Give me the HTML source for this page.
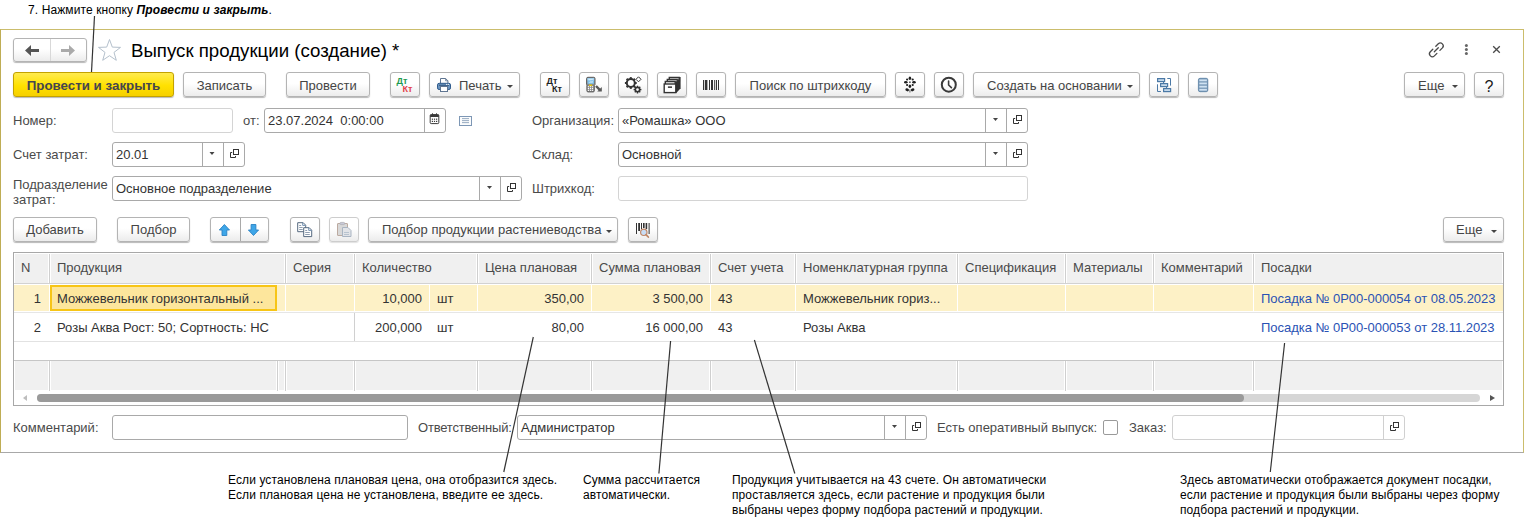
<!DOCTYPE html>
<html><head><meta charset="utf-8">
<style>
*{box-sizing:border-box}
html,body{margin:0;padding:0}
body{width:1524px;height:520px;overflow:hidden;background:#fff;position:relative;font-family:"Liberation Sans",sans-serif;font-size:13px;color:#333}
.a{position:absolute;white-space:nowrap}
.frame{position:absolute;left:0;top:29px;width:1524px;height:424px;border-top:1px solid #cbbd6c;border-left:1px solid #bfad55;border-right:1px solid #cbbd6c;border-bottom:1px solid #a8a8a8}
.btn{position:absolute;height:25px;top:72px;border:1px solid #b4b4b4;border-radius:3px;background:linear-gradient(#fff 0,#fff 45%,#ececec 100%);box-shadow:0 1px 1px rgba(0,0,0,.28);color:#454545;text-align:center;line-height:23px;padding-top:1px;white-space:nowrap}
.tb2{top:217px;height:25px;line-height:22px}
.lbl{position:absolute;color:#4a4a4a;white-space:nowrap;line-height:15px}
.inp{position:absolute;height:25px;border:1px solid #a9a9a9;border-radius:3px;background:#fff;color:#333;line-height:23px;padding-left:3px;white-space:nowrap}
.inp.dis{border-color:#d4d4d4}
.dd{position:absolute;top:0;bottom:0;border-left:1px solid #a9a9a9}
.caret{position:absolute;width:0;height:0;border-left:3.5px solid transparent;border-right:3.5px solid transparent;border-top:4px solid #444}
.ann{position:absolute;font-size:12px;line-height:15px;color:#000;white-space:nowrap;letter-spacing:0.1px}
.th{color:#4a4a4a;line-height:15px;margin-top:-1px}
.td{color:#333;line-height:15px}
svg.ln{position:absolute;left:0;top:0;pointer-events:none}
</style></head><body>
<!-- top annotation -->
<div class="ann" style="left:28px;top:3px">7. Нажмите кнопку <b><i>Провести и закрыть</i></b>.</div>

<div class="frame"></div>

<!-- nav -->
<div class="btn" style="left:13px;top:38px;width:74px;height:24px"></div>
<div class="a" style="left:50px;top:39px;width:1px;height:22px;background:#d8d8d8"></div>

<!-- title -->
<div class="a" style="left:131px;top:39px;font-size:18.67px;line-height:24px;color:#000">Выпуск продукции (создание) *</div>

<!-- toolbar -->
<div class="btn" style="left:13px;width:161px;background:linear-gradient(#ffeb4e 0%,#ffe100 55%,#f6d000 100%);border-color:#c3a200;color:#45454f;font-weight:bold;font-size:13.33px">Провести и закрыть</div>
<div class="btn" style="left:183px;width:83px">Записать</div>
<div class="btn" style="left:286px;width:84px">Провести</div>
<div class="btn" style="left:390px;width:30px"></div>
<div class="btn" style="left:429px;width:91px;text-align:left;padding-left:29px">Печать</div>
<div class="btn" style="left:540px;width:30px"></div>
<div class="btn" style="left:579px;width:30px"></div>
<div class="btn" style="left:618px;width:30px"></div>
<div class="btn" style="left:657px;width:30px"></div>
<div class="btn" style="left:696px;width:30px"></div>
<div class="btn" style="left:735px;width:151px">Поиск по штрихкоду</div>
<div class="btn" style="left:895px;width:30px"></div>
<div class="btn" style="left:934px;width:30px"></div>
<div class="btn" style="left:973px;width:167px;text-align:left;padding-left:13px">Создать на основании</div>
<div class="btn" style="left:1149px;width:30px"></div>
<div class="btn" style="left:1188px;width:30px"></div>
<div class="btn" style="left:1404px;width:61px;text-align:left;padding-left:13px">Еще</div>
<div class="btn" style="left:1474px;width:30px;font-size:16px;color:#1a1a1a;padding-top:2px">?</div>

<!-- fields -->
<div class="lbl" style="left:13px;top:113px">Номер:</div>
<div class="inp dis" style="left:112px;top:108px;width:121px"></div>
<div class="lbl" style="left:243px;top:113px">от:</div>
<div class="inp" style="left:264px;top:108px;width:182px">23.07.2024&nbsp; 0:00:00<div class="dd" style="left:159px"></div></div>

<div class="lbl" style="left:532px;top:113px">Организация:</div>
<div class="inp" style="left:618px;top:108px;width:410px">«Ромашка» ООО<div class="dd" style="left:366px"></div><div class="dd" style="left:387px"></div></div>

<div class="lbl" style="left:13px;top:147px">Счет затрат:</div>
<div class="inp" style="left:112px;top:142px;width:133px">20.01<div class="dd" style="left:89px"></div><div class="dd" style="left:110px"></div></div>
<div class="lbl" style="left:532px;top:147px">Склад:</div>
<div class="inp" style="left:618px;top:142px;width:410px">Основной<div class="dd" style="left:366px"></div><div class="dd" style="left:387px"></div></div>

<div class="lbl" style="left:13px;top:177px">Подразделение<br>затрат:</div>
<div class="inp" style="left:112px;top:176px;width:410px">Основное подразделение<div class="dd" style="left:366px"></div><div class="dd" style="left:387px"></div></div>
<div class="lbl" style="left:532px;top:181px">Штрихкод:</div>
<div class="inp dis" style="left:618px;top:176px;width:410px"></div>

<!-- table toolbar -->
<div class="btn tb2" style="left:13px;width:84px">Добавить</div>
<div class="btn tb2" style="left:117px;width:73px">Подбор</div>
<div class="btn tb2" style="left:210px;width:59px"></div>
<div class="a" style="left:240px;top:218px;width:1px;height:23px;background:#a9a9a9"></div>
<div class="btn tb2" style="left:290px;width:30px"></div>
<div class="btn tb2" style="left:329px;width:30px;border-color:#cdcdcd;box-shadow:0 1px 1px rgba(0,0,0,.12)"></div>
<div class="btn tb2" style="left:368px;width:250px;text-align:left;padding-left:13px">Подбор продукции растениеводства</div>
<div class="btn tb2" style="left:628px;width:30px"></div>
<div class="btn tb2" style="left:1443px;width:61px;text-align:left;padding-left:12px">Еще</div>

<!-- table -->
<div class="a" style="left:13px;top:252px;width:1491px;height:154px;border:1px solid #a8a8a8;background:#fff"></div>
<div class="a" style="left:15px;top:254px;width:1487px;height:29px;background:#f0f0f0"></div>
<div class="a" style="left:14px;top:283px;width:1489px;height:1px;background:#d2d2d2"></div>
<div class="a" style="left:48px;top:254px;width:3px;height:29px;background:#fff"></div><div class="a" style="left:49px;top:254px;width:1px;height:29px;background:#cfcfcf"></div>
<div class="a" style="left:284px;top:254px;width:3px;height:29px;background:#fff"></div><div class="a" style="left:285px;top:254px;width:1px;height:29px;background:#cfcfcf"></div>
<div class="a" style="left:353px;top:254px;width:3px;height:29px;background:#fff"></div><div class="a" style="left:354px;top:254px;width:1px;height:29px;background:#cfcfcf"></div>
<div class="a" style="left:476px;top:254px;width:3px;height:29px;background:#fff"></div><div class="a" style="left:477px;top:254px;width:1px;height:29px;background:#cfcfcf"></div>
<div class="a" style="left:590px;top:254px;width:3px;height:29px;background:#fff"></div><div class="a" style="left:591px;top:254px;width:1px;height:29px;background:#cfcfcf"></div>
<div class="a" style="left:709px;top:254px;width:3px;height:29px;background:#fff"></div><div class="a" style="left:710px;top:254px;width:1px;height:29px;background:#cfcfcf"></div>
<div class="a" style="left:794px;top:254px;width:3px;height:29px;background:#fff"></div><div class="a" style="left:795px;top:254px;width:1px;height:29px;background:#cfcfcf"></div>
<div class="a" style="left:956px;top:254px;width:3px;height:29px;background:#fff"></div><div class="a" style="left:957px;top:254px;width:1px;height:29px;background:#cfcfcf"></div>
<div class="a" style="left:1064px;top:254px;width:3px;height:29px;background:#fff"></div><div class="a" style="left:1065px;top:254px;width:1px;height:29px;background:#cfcfcf"></div>
<div class="a" style="left:1152px;top:254px;width:3px;height:29px;background:#fff"></div><div class="a" style="left:1153px;top:254px;width:1px;height:29px;background:#cfcfcf"></div>
<div class="a" style="left:1252px;top:254px;width:3px;height:29px;background:#fff"></div><div class="a" style="left:1253px;top:254px;width:1px;height:29px;background:#cfcfcf"></div>
<div class="a th" style="left:21px;top:261px">N</div>
<div class="a th" style="left:57px;top:261px">Продукция</div>
<div class="a th" style="left:293px;top:261px">Серия</div>
<div class="a th" style="left:362px;top:261px">Количество</div>
<div class="a th" style="left:485px;top:261px">Цена плановая</div>
<div class="a th" style="left:599px;top:261px">Сумма плановая</div>
<div class="a th" style="left:718px;top:261px">Счет учета</div>
<div class="a th" style="left:803px;top:261px">Номенклатурная группа</div>
<div class="a th" style="left:965px;top:261px">Спецификация</div>
<div class="a th" style="left:1073px;top:261px">Материалы</div>
<div class="a th" style="left:1161px;top:261px">Комментарий</div>
<div class="a th" style="left:1261px;top:261px">Посадки</div>
<div class="a" style="left:14px;top:285px;width:1489px;height:26px;background:#fdf1c6"></div>
<div class="a" style="left:49px;top:285px;width:1px;height:26px;background:#fff"></div>
<div class="a" style="left:285px;top:285px;width:1px;height:26px;background:#fff"></div>
<div class="a" style="left:354px;top:285px;width:1px;height:26px;background:#fff"></div>
<div class="a" style="left:477px;top:285px;width:1px;height:26px;background:#fff"></div>
<div class="a" style="left:591px;top:285px;width:1px;height:26px;background:#fff"></div>
<div class="a" style="left:710px;top:285px;width:1px;height:26px;background:#fff"></div>
<div class="a" style="left:795px;top:285px;width:1px;height:26px;background:#fff"></div>
<div class="a" style="left:957px;top:285px;width:1px;height:26px;background:#fff"></div>
<div class="a" style="left:1065px;top:285px;width:1px;height:26px;background:#fff"></div>
<div class="a" style="left:1153px;top:285px;width:1px;height:26px;background:#fff"></div>
<div class="a" style="left:1253px;top:285px;width:1px;height:26px;background:#fff"></div>
<div class="a" style="left:429px;top:285px;width:1px;height:26px;background:#fff"></div>
<div class="a" style="left:14px;top:312px;width:1489px;height:1px;background:#e6e6e6"></div>
<div class="a" style="left:14px;top:341px;width:1489px;height:1px;background:#e2e2e2"></div>
<div class="a" style="left:354px;top:313px;width:1px;height:28px;background:#d0d0d0"></div>
<div class="a" style="left:50px;top:285px;width:227px;height:26px;border:2px solid #f7c516;background:#fde69c"></div>
<div class="a td" style="right:1483px;top:291px">1</div>
<div class="a td" style="left:57px;top:291px">Можжевельник горизонтальный ...</div>
<div class="a td" style="right:1102px;top:291px">10,000</div>
<div class="a td" style="left:437px;top:291px">шт</div>
<div class="a td" style="right:940px;top:291px">350,00</div>
<div class="a td" style="right:821px;top:291px">3 500,00</div>
<div class="a td" style="left:718px;top:291px">43</div>
<div class="a td" style="left:803px;top:291px">Можжевельник гориз...</div>
<div class="a td" style="left:1261px;top:291px;color:#2a52b4;letter-spacing:-0.03px">Посадка № 0P00-000054 от 08.05.2023</div>
<div class="a td" style="right:1483px;top:320px">2</div>
<div class="a td" style="left:57px;top:320px">Розы Аква Рост: 50; Сортность: НС</div>
<div class="a td" style="right:1102px;top:320px">200,000</div>
<div class="a td" style="left:437px;top:320px">шт</div>
<div class="a td" style="right:940px;top:320px">80,00</div>
<div class="a td" style="right:821px;top:320px">16 000,00</div>
<div class="a td" style="left:718px;top:320px">43</div>
<div class="a td" style="left:803px;top:320px">Розы Аква</div>
<div class="a td" style="left:1261px;top:320px;color:#2a52b4;letter-spacing:-0.03px">Посадка № 0P00-000053 от 28.11.2023</div>
<div class="a" style="left:14px;top:360px;width:1489px;height:1px;background:#c6c6c6"></div>
<div class="a" style="left:15px;top:361px;width:1487px;height:29px;background:#f0f0f0"></div>
<div class="a" style="left:48px;top:361px;width:3px;height:29px;background:#fff"></div><div class="a" style="left:49px;top:361px;width:1px;height:30px;background:#cfcfcf"></div>
<div class="a" style="left:276px;top:361px;width:3px;height:29px;background:#fff"></div><div class="a" style="left:277px;top:361px;width:1px;height:30px;background:#cfcfcf"></div>
<div class="a" style="left:284px;top:361px;width:3px;height:29px;background:#fff"></div><div class="a" style="left:285px;top:361px;width:1px;height:30px;background:#cfcfcf"></div>
<div class="a" style="left:353px;top:361px;width:3px;height:29px;background:#fff"></div><div class="a" style="left:354px;top:361px;width:1px;height:30px;background:#cfcfcf"></div>
<div class="a" style="left:476px;top:361px;width:3px;height:29px;background:#fff"></div><div class="a" style="left:477px;top:361px;width:1px;height:30px;background:#cfcfcf"></div>
<div class="a" style="left:590px;top:361px;width:3px;height:29px;background:#fff"></div><div class="a" style="left:591px;top:361px;width:1px;height:30px;background:#cfcfcf"></div>
<div class="a" style="left:709px;top:361px;width:3px;height:29px;background:#fff"></div><div class="a" style="left:710px;top:361px;width:1px;height:30px;background:#cfcfcf"></div>
<div class="a" style="left:794px;top:361px;width:3px;height:29px;background:#fff"></div><div class="a" style="left:795px;top:361px;width:1px;height:30px;background:#cfcfcf"></div>
<div class="a" style="left:956px;top:361px;width:3px;height:29px;background:#fff"></div><div class="a" style="left:957px;top:361px;width:1px;height:30px;background:#cfcfcf"></div>
<div class="a" style="left:1064px;top:361px;width:3px;height:29px;background:#fff"></div><div class="a" style="left:1065px;top:361px;width:1px;height:30px;background:#cfcfcf"></div>
<div class="a" style="left:1152px;top:361px;width:3px;height:29px;background:#fff"></div><div class="a" style="left:1153px;top:361px;width:1px;height:30px;background:#cfcfcf"></div>
<div class="a" style="left:1252px;top:361px;width:3px;height:29px;background:#fff"></div><div class="a" style="left:1253px;top:361px;width:1px;height:30px;background:#cfcfcf"></div>
<div class="a" style="left:37px;top:394px;width:1443px;height:8px;border-radius:4px;background:#d6d6d6"></div>
<div class="a" style="left:37px;top:394px;width:1207px;height:8px;border-radius:4px;background:#9a9a9a"></div>
<div class="a" style="left:23px;top:395px;width:0;height:0;border-top:3px solid transparent;border-bottom:3px solid transparent;border-right:4px solid #bdbdbd"></div>
<div class="a" style="left:1490px;top:395px;width:0;height:0;border-top:3.5px solid transparent;border-bottom:3.5px solid transparent;border-left:5px solid #555"></div>

<!-- bottom fields -->
<div class="lbl" style="left:13px;top:420px">Комментарий:</div>
<div class="inp" style="left:112px;top:415px;width:296px"></div>
<div class="lbl" style="left:418px;top:420px;letter-spacing:-0.2px">Ответственный:</div>
<div class="inp" style="left:517px;top:415px;width:410px">Администратор<div class="dd" style="left:366px"></div><div class="dd" style="left:387px"></div></div>
<div class="lbl" style="left:937px;top:420px">Есть оперативный выпуск:</div>
<div class="a" style="left:1103px;top:420px;width:15px;height:15px;border:1px solid #9a9a9a;border-radius:2px;background:#fff"></div>
<div class="lbl" style="left:1129px;top:420px">Заказ:</div>
<div class="inp" style="left:1172px;top:415px;width:233px;border-color:#d0d0d0"><div class="dd" style="left:210px;border-color:#d0d0d0"></div></div>

<!-- icons overlay -->
<svg class="ln" width="1524" height="520" style="overflow:visible">
<!-- nav arrows -->
<path d="M25 50.5 L31 45 L31 56 Z M30.5 49 H39 V52 H30.5 Z" fill="#555"/>
<path d="M75 50.5 L69 45 L69 56 Z M69.5 49 H61 V52 H69.5 Z" fill="#aaa"/>
<!-- star -->
<path d="M109.5 39.5 L112.3 47.1 L120.5 47.4 L114 52.4 L116.3 60.3 L109.5 55.7 L102.7 60.3 L105 52.4 L98.5 47.4 L106.7 47.1 Z" fill="none" stroke="#b4c0cc" stroke-width="1"/>
<!-- link icon -->
<g fill="none" stroke="#4a4a4a" stroke-width="1.3" stroke-linecap="round">
<path d="M1435.8 46.3 L1438.3 43.8 A2.9 2.9 0 0 1 1442.4 47.9 L1439.9 50.4"/>
<path d="M1432.8 49.3 L1430.3 51.8 A2.9 2.9 0 0 0 1434.4 55.9 L1436.9 53.4"/>
<path d="M1434.3 51.8 L1438.3 47.8"/>
</g>
<!-- dots -->
<g fill="#666"><circle cx="1466.4" cy="45.6" r="1.5"/><circle cx="1466.4" cy="49.5" r="1.5"/><circle cx="1466.4" cy="53.4" r="1.5"/></g>
<!-- close -->
<path d="M1493.2 46.2 L1499.8 52.8 M1499.8 46.2 L1493.2 52.8" stroke="#4a4a4a" stroke-width="1.3"/>

<!-- printer -->
<g>
<path d="M440.5 83.5 V78.5 H445.6 L447.9 80.8 V83.5" fill="#fff" stroke="#5f7591" stroke-width="1"/>
<path d="M445.6 78.5 V80.8 H447.9" fill="none" stroke="#5f7591" stroke-width="0.8"/>
<rect x="437.5" y="83.3" width="13" height="6.2" rx="1.6" fill="#6b94bf" stroke="#2f5b8c" stroke-width="1"/>
<rect x="439" y="84.8" width="10" height="0.9" fill="#2c4f78"/>
<rect x="446.1" y="83.9" width="1.1" height="1" fill="#fff"/><rect x="447.8" y="83.9" width="1.1" height="1" fill="#fff"/>
<rect x="440.5" y="86.5" width="7" height="5" fill="#fff" stroke="#5f7591" stroke-width="1"/>
</g>
<!-- terminal -->
<g>
<path d="M586.6 78.6 Q586.6 77.3 587.9 77.3 H593.7 Q595 77.3 595 78.6 V84.5 L594.3 85.3 V90.8 Q594.3 91.9 593.2 91.9 H588 Q586.9 91.9 586.9 90.8 V85.3 L586.6 84.5 Z" fill="#8c8c8c" stroke="#5a5a5a" stroke-width="1"/>
<rect x="587.5" y="78.2" width="6.6" height="5.6" fill="#7cc0ea"/>
<rect x="587.5" y="78.2" width="6.6" height="2.2" fill="#a8d8f4"/>
<path d="M588.6 79.5 H592.8 M589.6 80.9 L591.2 81.6 H593 M588.8 82.7 H592.8" stroke="#e8f6ff" stroke-width="0.6" fill="none"/>
<rect x="589" y="84.6" width="3.2" height="1.3" fill="#f2cf00"/>
<g fill="#fff"><rect x="587.8" y="86.2" width="1.2" height="1.1"/><rect x="589.9" y="86.2" width="1.2" height="1.1"/><rect x="591.9" y="86.2" width="1.2" height="1.1"/>
<rect x="587.8" y="88" width="1.2" height="1.1"/><rect x="589.9" y="88" width="1.2" height="1.1"/><rect x="591.9" y="88" width="1.2" height="1.1"/>
<rect x="587.8" y="89.8" width="1.2" height="1.1"/><rect x="589.9" y="89.8" width="1.2" height="1.1"/><rect x="591.9" y="89.8" width="1.2" height="1.1"/></g>
<path d="M596 86 L600.3 90.3" stroke="#585858" stroke-width="2.4"/>
<path d="M597.2 91.6 H601.8 V87 Z" fill="#585858"/>
</g>
<!-- gears -->
<g fill="none" stroke="#333">
<circle cx="630.8" cy="83" r="4" stroke-width="2"/>
<circle cx="637.5" cy="89.6" r="2.2" stroke-width="1.6"/>
<path d="M638.5 76.8 L641 79.3 L638.5 81.8 L636 79.3 Z" stroke-width="1"/>
</g>
<g fill="#333">
<g transform="translate(630.8 83)">
<rect x="-1" y="-5.9" width="2" height="2"/><rect x="-1" y="3.9" width="2" height="2"/><rect x="-5.9" y="-1" width="2" height="2"/><rect x="3.9" y="-1" width="2" height="2"/>
<g transform="rotate(45)"><rect x="-1" y="-5.9" width="2" height="2"/><rect x="-1" y="3.9" width="2" height="2"/><rect x="-5.9" y="-1" width="2" height="2"/><rect x="3.9" y="-1" width="2" height="2"/></g>
</g>
<g transform="translate(637.5 89.6)">
<rect x="-0.7" y="-3.9" width="1.4" height="1.6"/><rect x="-0.7" y="2.3" width="1.4" height="1.6"/><rect x="-3.9" y="-0.7" width="1.6" height="1.4"/><rect x="2.3" y="-0.7" width="1.6" height="1.4"/>
<g transform="rotate(45)"><rect x="-0.7" y="-3.9" width="1.4" height="1.6"/><rect x="-0.7" y="2.3" width="1.4" height="1.6"/><rect x="-3.9" y="-0.7" width="1.6" height="1.4"/><rect x="2.3" y="-0.7" width="1.6" height="1.4"/></g>
</g>
</g>
<!-- archive -->
<path d="M674 81.5 L679 77 H680.6 V88.3 L676.3 93 H674 Z" fill="#333"/>
<g stroke="#333" stroke-width="1.4" fill="#fff" stroke-linejoin="miter">
<path d="M669.3 80 V77.5 H679.2 V79.5 L677.5 80.5"/>
<path d="M667.3 82 V79.5 H677.2 V81.5 L675.5 82.5"/>
<path d="M665.3 84 V81.5 H675.2 V84"/>
<rect x="664.2" y="84" width="11.6" height="8.6"/>
</g>
<rect x="667.9" y="86.4" width="4.1" height="1.5" fill="#333"/>
<!-- barcode -->
<g fill="#333">
<rect x="703" y="80" width="1" height="10"/><rect x="704.8" y="80" width="2.6" height="10"/><rect x="709" y="80" width="1" height="10"/><rect x="711" y="80" width="2" height="10"/><rect x="714.2" y="80" width="1" height="10"/><rect x="716" y="80" width="1" height="10"/><rect x="718" y="80" width="1" height="10"/>
</g>
<!-- flower -->
<g fill="#1e1e1e">
<ellipse cx="909.9" cy="78.2" rx="1.3" ry="1.8"/>
<ellipse cx="909.9" cy="86.2" rx="1.3" ry="1.8"/>
<ellipse cx="905.8" cy="82.2" rx="1.8" ry="1.3"/>
<ellipse cx="914" cy="82.2" rx="1.8" ry="1.3"/>
<circle cx="907.1" cy="79.5" r="1.1"/><circle cx="912.7" cy="79.5" r="1.1"/><circle cx="907.1" cy="85" r="1.1"/><circle cx="912.7" cy="85" r="1.1"/>
<rect x="909.2" y="81.5" width="1.4" height="1.4"/>
<ellipse cx="907.2" cy="89.8" rx="1.9" ry="1.4" transform="rotate(25 907.2 89.8)"/>
<ellipse cx="912.6" cy="89.8" rx="1.9" ry="1.4" transform="rotate(-25 912.6 89.8)"/>
</g>
<rect x="909.2" y="89.5" width="1.4" height="3" fill="#8a8a8a"/>
<!-- clock -->
<g fill="none" stroke="#3a3a3a">
<circle cx="948.8" cy="84.7" r="7" stroke-width="2"/>
<path d="M948.6 81 V85 L951.4 87.6" stroke-width="1.6" stroke-linecap="round"/>
</g>
<!-- structure -->
<g stroke="#4b79a6" stroke-width="1.2" fill="#c4d8ea">
<rect x="1157.6" y="78.6" width="7" height="3"/>
<rect x="1160.6" y="83.6" width="7" height="3"/>
<rect x="1163.6" y="88.6" width="7" height="3"/>
<path d="M1163.5 81.6 V83.6 M1166.5 86.6 V88.6" fill="none" stroke-width="1"/>
<path d="M1167.3 78.5 H1170.5 V85.6" fill="none" stroke-width="1"/>
<path d="M1157.5 84.3 V91.5 H1160.9" fill="none" stroke-width="1"/>
</g>
<!-- list -->
<g>
<rect x="1198.4" y="78.3" width="9.4" height="13.4" rx="1.6" fill="#6f92b2" stroke="#5b80a3" stroke-width="0.8"/>
<g fill="#cfe2f2"><rect x="1199.3" y="79.4" width="7.6" height="1.9"/><rect x="1199.3" y="82.5" width="7.6" height="1.9"/><rect x="1199.3" y="85.7" width="7.6" height="1.9"/><rect x="1199.3" y="88.8" width="7.6" height="1.9"/></g>
</g>
<!-- carets toolbar -->
<g fill="#444">
<path d="M507 85 H513 L510 88 Z"/>
<path d="M1127 85 H1133 L1130 88 Z"/>
<path d="M1452 85 H1458 L1455 88 Z"/>
<path d="M606 230 H612 L609 233 Z"/>
<path d="M1491 230 H1497 L1494 233 Z"/>
</g>
<!-- field carets -->
<g fill="#444">
<path d="M993 118 H998 L995.5 121 Z"/>
<path d="M993 152 H998 L995.5 155 Z"/>
<path d="M487 186 H492 L489.5 189 Z"/>
<path d="M209.5 152 H214.5 L212 155 Z"/>
<path d="M892 425 H897 L894.5 428 Z"/>
</g>
<!-- open icons -->
<g fill="none" stroke="#333" stroke-width="1">
<g id="opn"><rect x="1016.5" y="115.5" width="5" height="5"/><path d="M1015.2 118.5 H1013.5 V123.5 H1018.5 V122"/></g>
<use href="#opn" transform="translate(0 34)"/>
<use href="#opn" transform="translate(-506 68)"/>
<use href="#opn" transform="translate(-783 34)"/>
<use href="#opn" transform="translate(-101 307)"/>
<use href="#opn" transform="translate(377 307)"/>
</g>
<!-- calendar -->
<g>
<rect x="430.2" y="114.6" width="8.6" height="9" rx="1" fill="#fff" stroke="#3a3a3a" stroke-width="1"/>
<rect x="430.2" y="114.6" width="8.6" height="2.4" fill="#3a3a3a"/>
<rect x="432" y="113.3" width="1" height="2" fill="#3a3a3a"/><rect x="436" y="113.3" width="1" height="2" fill="#3a3a3a"/>
<g fill="#3a3a3a"><rect x="431.8" y="118.6" width="1.2" height="1.2"/><rect x="433.9" y="118.6" width="1.2" height="1.2"/><rect x="436" y="118.6" width="1.2" height="1.2"/><rect x="431.8" y="120.8" width="1.2" height="1.2"/><rect x="433.9" y="120.8" width="1.2" height="1.2"/><rect x="436" y="120.8" width="1.2" height="1.2"/></g>
</g>
<!-- text icon -->
<g>
<rect x="459.5" y="116.5" width="12" height="9" fill="#fbfcfd" stroke="#7d97b5" stroke-width="1"/>
<g fill="#8da2bb"><rect x="462" y="118.2" width="7" height="0.9"/><rect x="462" y="120.2" width="7" height="0.9"/><rect x="462" y="122.2" width="7" height="0.9"/></g>
</g>
<!-- arrows up/down -->
<path d="M224.4 224.5 L229.5 230 H226.8 V235.5 H222 V230 H219.3 Z" fill="#3ea6e8" stroke="#2a82c4" stroke-width="0.9" stroke-linejoin="round"/>
<path d="M253.5 235.5 L258.6 230 H255.9 V224.5 H251.1 V230 H248.4 Z" fill="#3ea6e8" stroke="#2a82c4" stroke-width="0.9" stroke-linejoin="round"/>
<!-- copy -->
<g stroke="#56697f" stroke-width="1" fill="#fff">
<path d="M297.7 222.7 H303.2 L305.7 225.2 V231.7 H297.7 Z"/>
<path d="M302.7 222.7 V225.4 H305.6" fill="none" stroke="#6f8fb0"/>
<path d="M303.7 227.7 H309.2 L311.7 230.2 V236.6 H303.7 Z"/>
<path d="M308.7 227.7 V230.4 H311.6" fill="none" stroke="#6f8fb0"/>
</g>
<g fill="#8394a8"><rect x="299.2" y="225" width="2" height="0.9"/><rect x="299.2" y="227.1" width="3.5" height="0.9"/><rect x="299.2" y="229" width="3.5" height="0.9"/><rect x="305.2" y="230" width="2" height="0.9"/><rect x="305.2" y="232" width="4.6" height="0.9"/><rect x="305.2" y="234" width="4.6" height="0.9"/></g>
<!-- paste disabled -->
<g>
<rect x="337.5" y="223.5" width="10" height="12" rx="0.4" fill="#d8d8d8" stroke="#bcaaa0" stroke-width="1"/>
<rect x="340" y="222.4" width="4.6" height="2.2" rx="0.8" fill="#c8cad8" stroke="#b0b0b8" stroke-width="0.8"/>
<path d="M342.5 227.5 H348 L351 230.5 V236.5 H342.5 Z" fill="#e2e4e8" stroke="#a9b4c2" stroke-width="1"/>
<g fill="#b4bfcc"><rect x="344" y="232" width="5" height="0.9"/><rect x="344" y="234" width="5" height="0.9"/></g>
</g>
<!-- barcode search -->
<g fill="#333">
<rect x="636" y="223" width="1" height="11"/><rect x="638.2" y="223" width="1.8" height="8"/><rect x="641" y="223" width="1" height="6"/><rect x="643" y="223" width="1.6" height="5"/><rect x="645.6" y="223" width="1.6" height="6"/><rect x="648.6" y="223" width="1" height="11"/>
</g>
<circle cx="643.8" cy="232.3" r="3.2" fill="#c8dcf4" stroke="#c08868" stroke-width="1.2"/>
<path d="M646 234.6 L648.3 237" stroke="#c08868" stroke-width="1.8" stroke-linecap="round"/>
<!-- dt kt -->
<g font-family="Liberation Sans" font-weight="bold" font-size="9px">
<text x="396.5" y="84.2" fill="#1e9a50">Дт</text>
<text x="402.5" y="92" fill="#e2414b">Кт</text>
<text x="546.5" y="84.2" fill="#222">Дт</text>
<text x="552" y="92" fill="#222">Кт</text>
</g>
</svg>

<!-- annotations -->
<div class="ann" style="left:228px;top:473px">Если установлена плановая цена, она отобразится здесь.<br>Если плановая цена не установлена, введите ее здесь.</div>
<div class="ann" style="left:583px;top:473px">Сумма рассчитается<br>автоматически.</div>
<div class="ann" style="left:732px;top:473px">Продукция учитывается на 43 счете. Он автоматически<br>проставляется здесь, если растение и продукция были<br>выбраны через форму подбора растений и продукции.</div>
<div class="ann" style="left:1180px;top:473px">Здесь автоматически отображается документ посадки,<br>если растение и продукция были выбраны через форму<br>подбора растений и продукции.</div>

<svg class="ln" width="1524" height="520">
<g stroke="#333" stroke-width="1.2" fill="none">
<line x1="94.5" y1="16" x2="91.5" y2="72"/>
<line x1="533.3" y1="337" x2="503.8" y2="472"/>
<line x1="670.6" y1="341" x2="658.9" y2="473.5"/>
<line x1="754.4" y1="340" x2="794.8" y2="473.5"/>
<line x1="1284.6" y1="343" x2="1270.3" y2="472"/>
</g>
</svg>
</body></html>
